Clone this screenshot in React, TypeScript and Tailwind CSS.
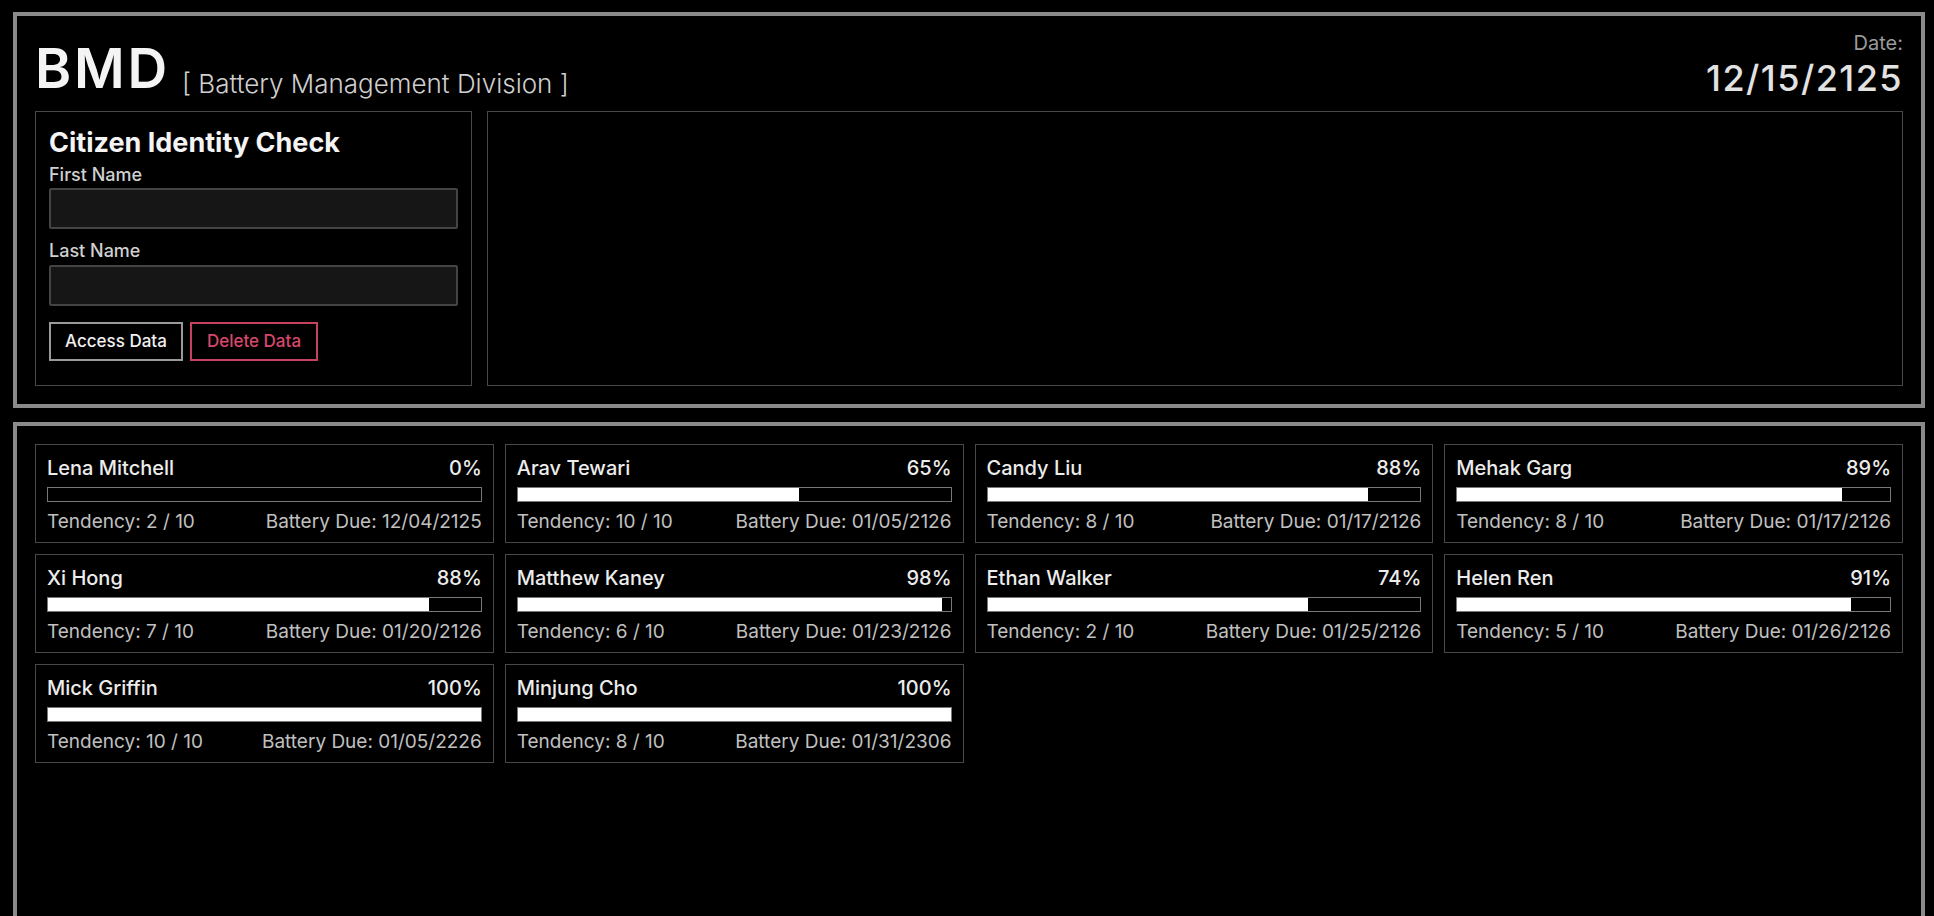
import React from "react";

interface Citizen {
  name: string;
  battery: number;
  tendency: number;
  due: string;
}

const CITIZENS: Citizen[] = [
  { name: "Lena Mitchell", battery: 0, tendency: 2, due: "12/04/2125" },
  { name: "Arav Tewari", battery: 65, tendency: 10, due: "01/05/2126" },
  { name: "Candy Liu", battery: 88, tendency: 8, due: "01/17/2126" },
  { name: "Mehak Garg", battery: 89, tendency: 8, due: "01/17/2126" },
  { name: "Xi Hong", battery: 88, tendency: 7, due: "01/20/2126" },
  { name: "Matthew Kaney", battery: 98, tendency: 6, due: "01/23/2126" },
  { name: "Ethan Walker", battery: 74, tendency: 2, due: "01/25/2126" },
  { name: "Helen Ren", battery: 91, tendency: 5, due: "01/26/2126" },
  { name: "Mick Griffin", battery: 100, tendency: 10, due: "01/05/2226" },
  { name: "Minjung Cho", battery: 100, tendency: 8, due: "01/31/2306" },
];

// one citizen tile in the roster
function CitizenCard({ citizen }: { citizen: Citizen }) {
  return (
    <div className="border border-[#484848] px-[11px] pt-[12px] pb-[9px]">
      <div className="flex justify-between text-[20px] font-medium leading-[22px] text-[#ececec]">
        <span>{citizen.name}</span>
        <span>{citizen.battery}%</span>
      </div>
      <div className="mt-[8px] h-[15px] border border-[#777] bg-black">
        <div className="h-full bg-white" style={{ width: `${citizen.battery}%` }} />
      </div>
      <div className="mt-[9px] flex justify-between text-[19px] leading-[22px] text-[#c0c0c0]">
        <span>Tendency: {citizen.tendency} / 10</span>
        <span>Battery Due: {citizen.due}</span>
      </div>
    </div>
  );
}

export default function App() {
  return (
    <div
      className="h-[916px] overflow-hidden bg-black pl-[13px] pr-[9px] pt-[12px]"
      style={{ fontFamily: "Inter, 'Noto Sans', sans-serif" }}
    >
      {/* Header panel */}
      <section className="border-4 border-[#8a8a8a] px-[18px] pb-[18px]">
        <div className="flex h-[95px] items-end justify-between pb-[15px]">
          <div className="flex items-end gap-[12px]">
            <h1 className="text-[55px] font-semibold leading-none tracking-[0.05em] text-[#f4f4f4]">BMD</h1>
            <span className="translate-y-[1px] text-[26px] font-light leading-none text-[#cfcfcf]">
              [ Battery Management Division ]
            </span>
          </div>
          <div className="flex flex-col items-end">
            <span className="mb-[7px] text-[20px] leading-none text-[#9a9a9a]">Date:</span>
            <span className="text-[36px] font-medium leading-none tracking-[0.04em] text-[#e2e2e2]">12/15/2125</span>
          </div>
        </div>

        <div className="flex gap-[15px]">
          {/* Identity check form */}
          <div className="h-[275px] w-[437px] shrink-0 border border-[#484848] px-[13px] pt-[15px]">
            <h2 className="text-[27px] font-bold leading-[31px] text-[#f4f4f4]">Citizen Identity Check</h2>
            <label className="mt-[7px] block text-[18px] font-medium leading-[20px] text-[#d0d0d0]">First Name</label>
            <input className="mt-[3px] block h-[41px] w-full rounded-[2px] border-2 border-[#444] bg-[#161616] outline-none" />
            <label className="mt-[12px] block text-[18px] font-medium leading-[20px] text-[#d0d0d0]">Last Name</label>
            <input className="mt-[4px] block h-[41px] w-full rounded-[2px] border-2 border-[#444] bg-[#161616] outline-none" />
            <div className="mt-[16px] flex gap-[7px]">
              <button className="h-[39px] w-[134px] border-2 border-[#9a9a9a] bg-black text-[17px] font-medium text-[#f0f0f0]">
                Access Data
              </button>
              <button className="h-[39px] w-[128px] border-2 border-[#c6415e] bg-black text-[17px] font-medium text-[#d9476a]">
                Delete Data
              </button>
            </div>
          </div>

          {/* Result view */}
          <div className="h-[275px] flex-1 border border-[#484848]" />
        </div>
      </section>

      {/* Roster panel */}
      <section className="mt-[14px] h-[520px] border-4 border-[#8a8a8a] px-[18px] pt-[18px]">
        <div className="grid grid-cols-4 gap-[11px]">
          {CITIZENS.map((c) => (
            <CitizenCard key={c.name} citizen={c} />
          ))}
        </div>
      </section>
    </div>
  );
}
